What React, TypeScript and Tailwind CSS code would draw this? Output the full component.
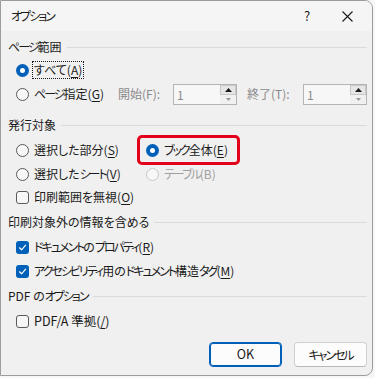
import type { ReactNode } from 'react'

const font = "[font-family:'Noto_Sans_CJK_JP','Noto_Sans',sans-serif] [font-feature-settings:'palt']"

// Yu Gothic UI has narrow katakana, so squeeze katakana runs a bit
function T({ s }: { s: string }) {
  const parts = s.split(/([\u30A0-\u30FF]+)/)
  return (
    <>
      {parts.map((p, i) =>
        i % 2 === 1 ? (
          <span key={i} className="tracking-[-2px]">
            {p}
          </span>
        ) : (
          p
        ),
      )}
    </>
  )
}

function Key({ children }: { children: ReactNode }) {
  return <span className="underline underline-offset-2">{children}</span>
}

function Label({ text, k, className = '' }: { text: string; k?: string; className?: string }) {
  return (
    <span className={`whitespace-nowrap ${className}`}>
      <T s={text} />
      {k && (
        <>
          (<Key>{k}</Key>)
        </>
      )}
    </span>
  )
}

function Radio({ checked = false, disabled = false }: { checked?: boolean; disabled?: boolean }) {
  if (checked) {
    return (
      <span className="flex h-[13px] w-[13px] shrink-0 items-center justify-center rounded-full bg-[#005fb8]">
        <span className="h-[5px] w-[5px] rounded-full bg-white" />
      </span>
    )
  }
  return (
    <span
      className={`h-[13px] w-[13px] shrink-0 rounded-full border bg-[#f7f7f7] ${
        disabled ? 'border-[#c8c8c8]' : 'border-[#5a5a5a]'
      }`}
    />
  )
}

function Check({ checked = false }: { checked?: boolean }) {
  if (checked) {
    return (
      <span className="flex h-[13px] w-[13px] shrink-0 items-center justify-center rounded-[3px] bg-[#005fb8]">
        <svg width="9" height="9" viewBox="0 0 9 9" fill="none">
          <path d="M1.5 4.8 3.6 6.8 7.6 2.2" stroke="white" strokeWidth="1.2" strokeLinecap="round" strokeLinejoin="round" />
        </svg>
      </span>
    )
  }
  return <span className="h-[13px] w-[13px] shrink-0 rounded-[3px] border border-[#5a5a5a] bg-[#f7f7f7]" />
}

function Section({ title, className }: { title: string; className: string }) {
  return (
    <div className={`flex h-[20px] items-center gap-[5px] pl-[7px] pr-[5px] ${className}`}>
      <Label text={title} />
      <span className="h-px flex-1 bg-[#dadada]" />
    </div>
  )
}

function Spin() {
  return (
    <div className="flex h-[21px] w-[64px] border border-[#b4b4b4] bg-[#f7f7f7]">
      <span className="flex-1 pl-[3px] leading-[19px] text-[#8a8a8a]">1</span>
      <div className="flex w-[16px] flex-col">
        <span className="flex h-[10px] items-center justify-center border border-[#c8c8c8] bg-[#e6e6e6]">
          <svg width="7" height="4" viewBox="0 0 7 4"><path d="M0 4 3.5 0 7 4Z" fill="#1a1a1a" /></svg>
        </span>
        <span className="flex flex-1 items-center justify-center bg-[#f0f0f0]">
          <svg width="5" height="3" viewBox="0 0 5 3"><path d="M0 0 2.5 3 5 0Z" fill="#9a9a9a" /></svg>
        </span>
      </div>
    </div>
  )
}

export default function App() {
  return (
    <div className={`h-[378px] w-[375px] bg-[#f6f6f6] text-[12px] text-[#1a1a1a] ${font}`}>
      <div className="flex h-[376px] w-[373px] flex-col overflow-hidden rounded-br-[8px] rounded-tr-[8px] border border-[#9c9c9c] bg-[#f0f0f0]">
        <div className="flex h-[30px] items-center bg-[#f5f5f5] pl-[10px]">
          <Label text="オプション" className="flex-1" />
          <span className="w-[22px] text-[13px]">?</span>
          <span className="flex w-[46px] justify-center pr-[4px]">
            <svg width="11" height="11" viewBox="0 0 11 11">
              <path d="M0.5 0.5 10.5 10.5M10.5 0.5 0.5 10.5" stroke="#1a1a1a" strokeWidth="1.1" />
            </svg>
          </span>
        </div>

        <Section title="ページ範囲" className="mt-[6px]" />
        <div className="mt-[3px] flex h-[20px] items-center pl-[15px]">
          <Radio checked />
          <span className="ml-[3px] border border-dotted border-[#1a1a1a] px-[1px] leading-[16px]">
            すべて(<Key>A</Key>)
          </span>
        </div>
        <div className="mt-[3px] flex h-[22px] items-center pl-[15px]">
          <Radio />
          <Label text="ページ指定" k="G" className="ml-[5px] w-[84px]" />
          <span className="w-[55px] text-[#8a8a8a]">開始(F):</span>
          <Spin />
          <span className="ml-[10px] w-[56px] text-[#8a8a8a]">終了(T):</span>
          <Spin />
        </div>

        <Section title="発行対象" className="mt-[10px]" />
        <div className="mt-[5px] flex h-[20px] items-center pl-[15px]">
          <div className="flex w-[130px] items-center">
            <Radio />
            <Label text="選択した部分" k="S" className="ml-[5px]" />
          </div>
          <div className="relative flex items-center">
            <Radio checked />
            <Label text="ブック全体" k="E" className="ml-[5px]" />
            <span className="absolute -left-[9px] -top-[6px] h-[30px] w-[103px] rounded-[5px] border-[3px] border-[#e3001b]" />
          </div>
        </div>
        <div className="mt-[4px] flex h-[20px] items-center pl-[15px]">
          <div className="flex w-[130px] items-center">
            <Radio />
            <Label text="選択したシート" k="V" className="ml-[5px]" />
          </div>
          <Radio disabled />
          <Label text="テーブル(B)" className="ml-[5px] text-[#a0a0a0]" />
        </div>
        <div className="mt-[3px] flex h-[20px] items-center pl-[15px]">
          <Check />
          <Label text="印刷範囲を無視" k="O" className="ml-[5px]" />
        </div>

        <Section title="印刷対象外の情報を含める" className="mt-[5px]" />
        <div className="mt-[5px] flex h-[20px] items-center pl-[15px]">
          <Check checked />
          <Label text="ドキュメントのプロパティ" k="R" className="ml-[5px]" />
        </div>
        <div className="mt-[4px] flex h-[20px] items-center pl-[15px]">
          <Check checked />
          <Label text="アクセシビリティ用のドキュメント構造タグ" k="M" className="ml-[5px]" />
        </div>

        <Section title="PDF のオプション" className="mt-[5px]" />
        <div className="mt-[5px] flex h-[20px] items-center pl-[15px]">
          <Check />
          <Label text="PDF/A 準拠" k="/" className="ml-[5px] text-[12.5px]" />
        </div>

        <div className="mt-[11px] flex justify-end gap-[12px] pr-[5px]">
          <button className="h-[25px] w-[73px] rounded-[4px] border border-[#005fb8] bg-[#fcfcfc] text-[12.5px] shadow-[inset_0_0_0_1px_#005fb8]">
            OK
          </button>
          <button className="h-[25px] w-[73px] rounded-[4px] border border-[#d0d0d0] border-b-[#b8b8b8] bg-[#fcfcfc]">
            <T s="キャンセル" />
          </button>
        </div>
      </div>
    </div>
  )
}
